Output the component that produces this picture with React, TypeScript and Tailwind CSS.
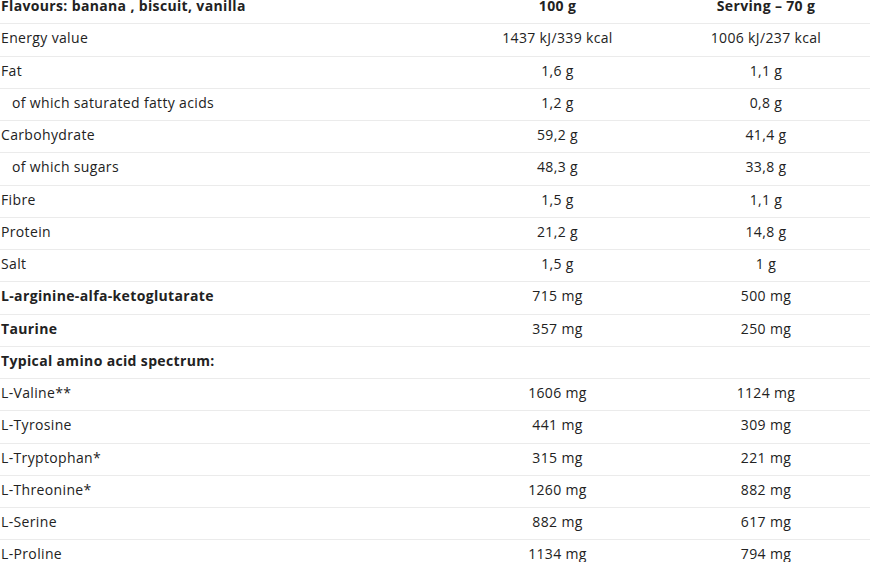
import React from 'react';

type Row = { label: string; a: string; b: string; bold?: boolean; indent?: boolean };

const rows: Row[] = [
  { label: 'Flavours: banana , biscuit, vanilla', a: '100 g', b: 'Serving – 70 g', bold: true },
  { label: 'Energy value', a: '1437 kJ/339 kcal', b: '1006 kJ/237 kcal' },
  { label: 'Fat', a: '1,6 g', b: '1,1 g' },
  { label: 'of which saturated fatty acids', a: '1,2 g', b: '0,8 g', indent: true },
  { label: 'Carbohydrate', a: '59,2 g', b: '41,4 g' },
  { label: 'of which sugars', a: '48,3 g', b: '33,8 g', indent: true },
  { label: 'Fibre', a: '1,5 g', b: '1,1 g' },
  { label: 'Protein', a: '21,2 g', b: '14,8 g' },
  { label: 'Salt', a: '1,5 g', b: '1 g' },
  { label: 'L-arginine-alfa-ketoglutarate', a: '715 mg', b: '500 mg', bold: true },
  { label: 'Taurine', a: '357 mg', b: '250 mg', bold: true },
  { label: 'Typical amino acid spectrum:', a: '', b: '', bold: true },
  { label: 'L-Valine**', a: '1606 mg', b: '1124 mg' },
  { label: 'L-Tyrosine', a: '441 mg', b: '309 mg' },
  { label: 'L-Tryptophan*', a: '315 mg', b: '221 mg' },
  { label: 'L-Threonine*', a: '1260 mg', b: '882 mg' },
  { label: 'L-Serine', a: '882 mg', b: '617 mg' },
  { label: 'L-Proline', a: '1134 mg', b: '794 mg' },
];

export default function App() {
  return (
    <div className="w-[870px] h-[562px] overflow-hidden bg-white">
      <div
        className="-mt-[8px] text-[14px] text-[#222] tracking-[0.35px]"
        style={{ fontFamily: '"Open Sans", "Noto Sans", sans-serif' }}
      >
        {rows.map((r, i) => {
          const weight = i === 0 ? 'font-bold' : '';
          return (
            <div
              key={r.label}
              className="grid grid-cols-[453px_207px_1fr] items-center h-[32.25px] pb-[3px] border-b border-[#ebebeb] leading-5"
            >
              <div className={`${r.indent ? 'pl-[12px]' : 'pl-[1px]'} ${r.bold ? 'font-bold' : ''}`}>{r.label}</div>
              <div className={`text-center pl-[2px] ${weight}`}>{r.a}</div>
              <div className={`text-center pl-[2px] ${weight}`}>{r.b}</div>
            </div>
          );
        })}
      </div>
    </div>
  );
}
